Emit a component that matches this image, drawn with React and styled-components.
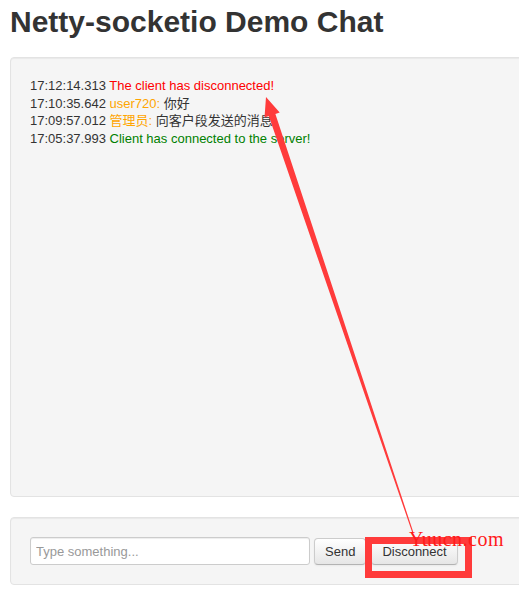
import React from "react";
import styled, { createGlobalStyle } from "styled-components";

const GlobalStyle = createGlobalStyle`
  html, body {
    margin: 0;
    padding: 0;
    overflow: hidden;
    background: #fff;
  }
  body {
    font-family: "Liberation Sans", Arial, "Noto Sans CJK SC", sans-serif;
    color: #333;
  }
`;

const Page = styled.div`
  position: relative;
  width: 700px;
  padding: 0 10px;
`;

const Title = styled.h1`
  margin: 5px 0 19px;
  font-size: 30px;
  line-height: 33px;
  font-weight: bold;
  color: #333;
`;

const Well = styled.div`
  background: #f5f5f5;
  border: 1px solid #e3e3e3;
  border-radius: 4px;
  box-shadow: inset 0 1px 1px rgba(0, 0, 0, 0.05);
  padding: 19px;
  margin-bottom: 20px;
  height: ${(p) => (p.$height ? p.$height + "px" : "auto")};
`;

const Controls = styled(Well)`
  display: flex;
  align-items: center;
`;

const Line = styled.div`
  font-size: 13px;
  line-height: 17.7px;
  white-space: nowrap;
`;

const Time = styled.span`
  color: #333;
`;

const Tone = styled.span`
  color: ${(p) => p.$color};
`;

const Input = styled.input`
  box-sizing: border-box;
  width: 280px;
  height: 28px;
  padding: 4px 5px;
  border: 1px solid #ccc;
  border-radius: 3px;
  box-shadow: inset 0 1px 1px rgba(0, 0, 0, 0.075);
  font: 13px "Liberation Sans", Arial, sans-serif;
  color: #555;
  background: #fff;
  outline: none;
  &::placeholder {
    color: #999;
  }
`;

const Button = styled.button`
  box-sizing: border-box;
  height: 27px;
  margin-left: ${(p) => p.$gap}px;
  padding: 0 10px;
  font: 13px "Liberation Sans", Arial, sans-serif;
  color: #333;
  background: linear-gradient(#ffffff, #e6e6e6);
  border: 1px solid #ccc;
  border-bottom-color: #b3b3b3;
  border-radius: 4px;
  box-shadow: inset 0 1px 0 rgba(255, 255, 255, 0.2),
    0 1px 2px rgba(0, 0, 0, 0.05);
`;

const Overlay = styled.svg`
  position: absolute;
  left: 0;
  top: 0;
  pointer-events: none;
`;

const Watermark = styled.span`
  position: absolute;
  left: 409px;
  top: 524px;
  font-family: "Liberation Serif", "Times New Roman", serif;
  font-size: 20px;
  line-height: 20px;
  letter-spacing: 0.5px;
  color: #ff1a1a;
  pointer-events: none;
  white-space: nowrap;
`;

const messages = [
  { time: "17:12:14.313", parts: [{ text: "The client has disconnected!", color: "#ff0000" }] },
  {
    time: "17:10:35.642",
    parts: [
      { text: "user720:", color: "#ffa500" },
      { text: "你好", color: "#333" },
    ],
  },
  {
    time: "17:09:57.012",
    parts: [
      { text: "管理员:", color: "#ffa500" },
      { text: "向客户段发送的消息", color: "#333" },
    ],
  },
  { time: "17:05:37.993", parts: [{ text: "Client has connected to the server!", color: "#008000" }] },
];

// annotation arrow, thick head tapering to a hairline near the button
const arrow =
  "266,92 279.7,107.4 275.4,108.9 413.5,527.8 412.5,528.2 268.8,111.1 264.5,112.6";

export default function App() {
  return (
    <>
      <GlobalStyle />
      <Page>
        <Title>Netty-socketio Demo Chat</Title>
        <Well $height={400}>
          {messages.map((m, i) => (
            <Line key={i}>
              <Time>{m.time}</Time>
              {m.parts.map((p, j) => (
                <Tone key={j} $color={p.color}>
                  {" " + p.text}
                </Tone>
              ))}
            </Line>
          ))}
        </Well>
        <Controls>
          <Input placeholder="Type something..." />
          <Button $gap={4}>Send</Button>
          <Button $gap={5}>Disconnect</Button>
        </Controls>
        <Overlay width="519" height="590" viewBox="0 0 519 590">
          <polygon points={arrow} fill="#ff3b3b" />
          <rect
            x="368.5"
            y="535.5"
            width="100"
            height="34"
            fill="none"
            stroke="#ff3b3b"
            strokeWidth="7"
          />
        </Overlay>
        <Watermark>Yuucn.com</Watermark>
      </Page>
    </>
  );
}
